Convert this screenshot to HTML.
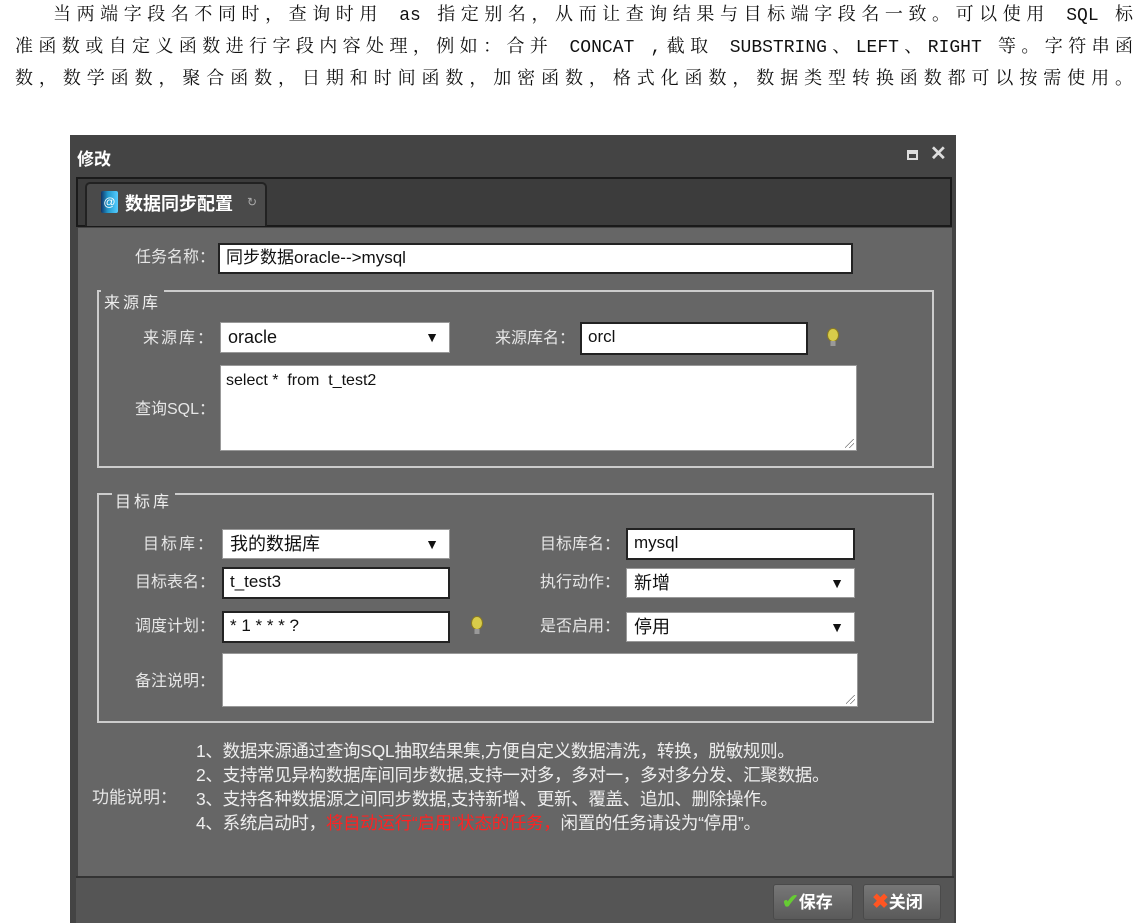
<!DOCTYPE html>
<html><head><meta charset="utf-8"><style>
*{box-sizing:border-box;margin:0;padding:0}
body{width:1144px;height:923px;background:#fff;position:relative;overflow:hidden;font-family:"Liberation Sans","Noto Sans CJK SC",sans-serif}
.top{position:absolute;left:15px;width:1118px;font-family:"Liberation Mono","Noto Serif CJK SC",serif;font-size:18px;color:#111;line-height:32px;text-align:justify;text-align-last:justify;white-space:nowrap}
.a{position:absolute}
.lbl{position:absolute;color:#e6e6e6;font-size:16px;text-align:right;line-height:20px}
.inp{position:absolute;background:#fff;border:2px solid #222;color:#111;font-size:17px;padding-left:6px;line-height:26px}
.sel{position:absolute;background:#fff;border:1px solid #999;color:#111;font-size:18px;padding-left:7px;line-height:28px}
.sel:after{content:"▼";position:absolute;right:10px;top:0;font-size:14px}
.fs{position:absolute;border:2px solid #ccc;}
.leg{position:absolute;background:#666;color:#eee;font-size:16px;padding:0 3px;letter-spacing:3px}
.bulb{position:absolute;width:12px;height:20px}
.ta{position:absolute;background:#fff;border:1px solid #999}
.ta:after{content:"";position:absolute;right:2px;bottom:2px;width:9px;height:9px;background:linear-gradient(135deg,transparent 45%,#777 45%,#777 52%,transparent 52%,transparent 70%,#777 70%,#777 77%,transparent 77%)}
.btn{position:absolute;top:884px;height:36px;background:linear-gradient(#777,#5a5a5a);border:1px solid #4a4a4a;border-radius:3px;color:#fff;font-size:17px;line-height:34px;font-weight:bold}
</style></head><body>
<div class="top" style="top:0;left:53px;width:1080px">当两端字段名不同时，查询时用 as 指定别名，从而让查询结果与目标端字段名一致。可以使用 SQL 标</div>
<div class="top" style="top:32px">准函数或自定义函数进行字段内容处理，例如：合并 CONCAT ,截取 SUBSTRING、LEFT、RIGHT 等。字符串函</div>
<div class="top" style="top:64px">数，数学函数，聚合函数，日期和时间函数，加密函数，格式化函数，数据类型转换函数都可以按需使用。</div>

<div class="a" style="left:70px;top:135px;width:886px;height:788px;background:#444"></div>
<div class="a" style="left:77px;top:145px;color:#fff;font-weight:bold;font-size:17px">修改</div>
<div class="a" style="left:907px;top:150px;width:11px;height:10px;border:2px solid #ddd;border-top-width:4px"></div>
<div class="a" style="left:930px;top:141px;color:#ddd;font-size:20px;font-weight:bold">✕</div>
<div class="a" style="left:76px;top:177px;width:876px;height:50px;background:#3c3c3c;border:2px solid #1a1a1a"></div>
<div class="a" style="left:85px;top:182px;width:182px;height:44px;background:#4a4a4a;border:2px solid #222;border-bottom:none;border-radius:5px 5px 0 0"></div>
<div class="a" style="left:101px;top:191px;width:17px;height:22px;background:linear-gradient(90deg,#136,#29c 40%,#5cf);border-radius:2px;color:#fff;font-size:12px;text-align:center;line-height:22px">@</div>
<div class="a" style="left:125px;top:190px;color:#fff;font-weight:bold;font-size:18px">数据同步配置</div>
<div class="a" style="left:247px;top:195px;color:#aaa;font-size:12px">↻</div>
<div class="a" style="left:78px;top:228px;width:874px;height:648px;background:#666"></div>
<div class="a" style="left:76px;top:876px;width:878px;height:47px;background:#555;border-top:2px solid #333"></div>

<div class="lbl" style="left:110px;top:248px;width:105px">任务名称：</div>
<div class="inp" style="left:218px;top:243px;width:635px;height:31px">同步数据oracle-->mysql</div>

<div class="fs" style="left:97px;top:290px;width:837px;height:178px"></div>
<div class="leg" style="left:101px;top:289px">来源库</div>
<div class="lbl" style="left:110px;top:329px;width:105px;letter-spacing:2px">来源库：</div>
<div class="sel" style="left:220px;top:322px;width:230px;height:31px">oracle</div>
<div class="lbl" style="left:470px;top:329px;width:105px">来源库名：</div>
<div class="inp" style="left:580px;top:322px;width:228px;height:33px">orcl</div>
<svg class="bulb" style="left:827px;top:328px" viewBox="0 0 12 20"><ellipse cx="6" cy="7" rx="5.5" ry="6.5" fill="#d8cc4a" stroke="#8a7a20"/><rect x="3.5" y="13" width="5" height="5" fill="#999"/></svg>
<div class="lbl" style="left:110px;top:400px;width:105px">查询SQL：</div>
<div class="ta" style="left:220px;top:365px;width:637px;height:86px;font-size:16px;padding:6px 5px;color:#111">select *&nbsp; from&nbsp; t_test2</div>

<div class="fs" style="left:97px;top:493px;width:837px;height:230px"></div>
<div class="leg" style="left:112px;top:488px">目标库</div>
<div class="lbl" style="left:110px;top:535px;width:105px;letter-spacing:2px">目标库：</div>
<div class="sel" style="left:222px;top:529px;width:228px;height:30px">我的数据库</div>
<div class="lbl" style="left:515px;top:535px;width:105px">目标库名：</div>
<div class="inp" style="left:626px;top:528px;width:229px;height:32px">mysql</div>
<div class="lbl" style="left:110px;top:573px;width:105px">目标表名：</div>
<div class="inp" style="left:222px;top:567px;width:228px;height:32px">t_test3</div>
<div class="lbl" style="left:515px;top:573px;width:105px">执行动作：</div>
<div class="sel" style="left:626px;top:568px;width:229px;height:30px">新增</div>
<div class="lbl" style="left:110px;top:617px;width:105px">调度计划：</div>
<div class="inp" style="left:222px;top:611px;width:228px;height:32px">* 1 * * * ?</div>
<svg class="bulb" style="left:471px;top:616px" viewBox="0 0 12 20"><ellipse cx="6" cy="7" rx="5.5" ry="6.5" fill="#d8cc4a" stroke="#8a7a20"/><rect x="3.5" y="13" width="5" height="5" fill="#999"/></svg>
<div class="lbl" style="left:515px;top:617px;width:105px">是否启用：</div>
<div class="sel" style="left:626px;top:612px;width:229px;height:30px">停用</div>
<div class="lbl" style="left:110px;top:672px;width:105px">备注说明：</div>
<div class="ta" style="left:222px;top:653px;width:636px;height:54px"></div>

<div class="lbl" style="left:92px;top:788px;width:102px;font-size:17px;text-align:left">功能说明：</div>
<div class="a" style="left:196px;top:739px;color:#eee;font-size:17.5px;line-height:24px;letter-spacing:-0.3px;white-space:nowrap">
1、数据来源通过查询SQL抽取结果集,方便自定义数据清洗，转换，脱敏规则。<br>
2、支持常见异构数据库间同步数据,支持一对多，多对一，多对多分发、汇聚数据。<br>
3、支持各种数据源之间同步数据,支持新增、更新、覆盖、追加、删除操作。<br>
4、系统启动时，<span style="color:#f22">将自动运行“启用”状态的任务，</span>闲置的任务请设为“停用”。</div>

<div class="btn" style="left:773px;width:80px;padding-left:8px"><span style="color:#6c3;font-size:20px">✔</span>保存</div>
<div class="btn" style="left:863px;width:78px;padding-left:8px"><span style="color:#f52;font-size:20px">✖</span>关闭</div>
</body></html>
